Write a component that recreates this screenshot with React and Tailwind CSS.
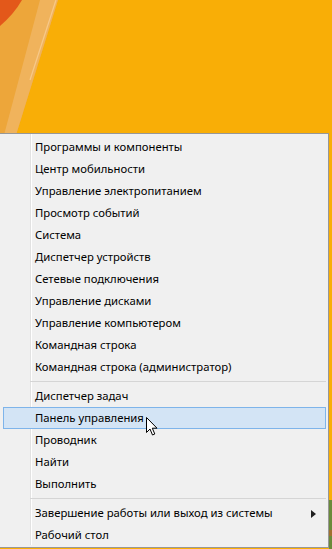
import React from "react";

const group1 = [
  "Программы и компоненты",
  "Центр мобильности",
  "Управление электропитанием",
  "Просмотр событий",
  "Система",
  "Диспетчер устройств",
  "Сетевые подключения",
  "Управление дисками",
  "Управление компьютером",
  "Командная строка",
  "Командная строка (администратор)",
];
const group2 = ["Диспетчер задач", "Панель управления", "Проводник", "Найти", "Выполнить"];

function Item({ label, active, arrow }) {
  return (
    <div
      className={
        "relative flex h-[22px] items-center ml-[3px] mr-[2px] pl-[31px] border " +
        (active ? "border-[#7eb4ea] bg-[#d3e4f5]" : "border-transparent")
      }
    >
      <span className="text-[11.3px] leading-none text-black">{label}</span>
      {arrow && (
        <svg className="absolute right-[9px] top-[7px]" width="5" height="8" viewBox="0 0 5 8">
          <path d="M0 0 L5 4 L0 8 Z" fill="#202020" />
        </svg>
      )}
    </div>
  );
}

function Sep() {
  return (
    <div className="flex h-[7px] items-center ml-[30px] mr-[2px]">
      <div className="h-px w-full bg-[#d5d5d5]" />
    </div>
  );
}

export default function App() {
  return (
    <div
      className="relative h-[549px] w-[332px] overflow-hidden bg-[#f9ae06]"
      style={{ fontFamily: '"Noto Sans", "Open Sans", sans-serif' }}
    >
      <svg className="absolute inset-0" width="332" height="549" viewBox="0 0 332 549">
        <polygon points="0,0 58,0 16,135 0,135" fill="#eda63a" />
        <polygon points="40,0 58,0 16,135 4,135" fill="#f0b35c" />
        <line x1="56" y1="0" x2="30" y2="80" stroke="#f7c98a" strokeWidth="1.2" />
        <path d="M0 0 L22 0 Q14 14 0 26 Z" fill="#e3581a" />
        <rect x="329" y="500" width="3" height="49" fill="#6a8a3a" />
        <rect x="329" y="530" width="3" height="6" fill="#a07030" />
      </svg>

      <div className="relative mt-[133px] w-[329px] h-[415px] border-t border-r border-b border-[#979797] bg-[#f0f0f0] pt-[2px]">
        <div className="absolute left-[30px] top-0 bottom-[2px] w-px bg-[#e2e2e2]" />
        <div className="absolute left-[31px] top-0 bottom-[2px] w-px bg-[#ffffff]" />
        <div className="relative">
          {group1.map((l) => (
            <Item key={l} label={l} />
          ))}
          <Sep />
          {group2.map((l) => (
            <Item key={l} label={l} active={l === "Панель управления"} />
          ))}
          <Sep />
          <Item label="Завершение работы или выход из системы" arrow />
          <Item label="Рабочий стол" />
        </div>
      </div>

      <svg className="absolute left-[146px] top-[417px]" width="12" height="19" viewBox="0 0 12 19">
        <path
          d="M0.5 0.5 L0.5 15.5 L4 12 L6.5 18 L8.8 17 L6.3 11.2 L11 11.2 Z"
          fill="#ffffff"
          stroke="#000000"
          strokeWidth="1"
          strokeLinejoin="miter"
        />
      </svg>
    </div>
  );
}
